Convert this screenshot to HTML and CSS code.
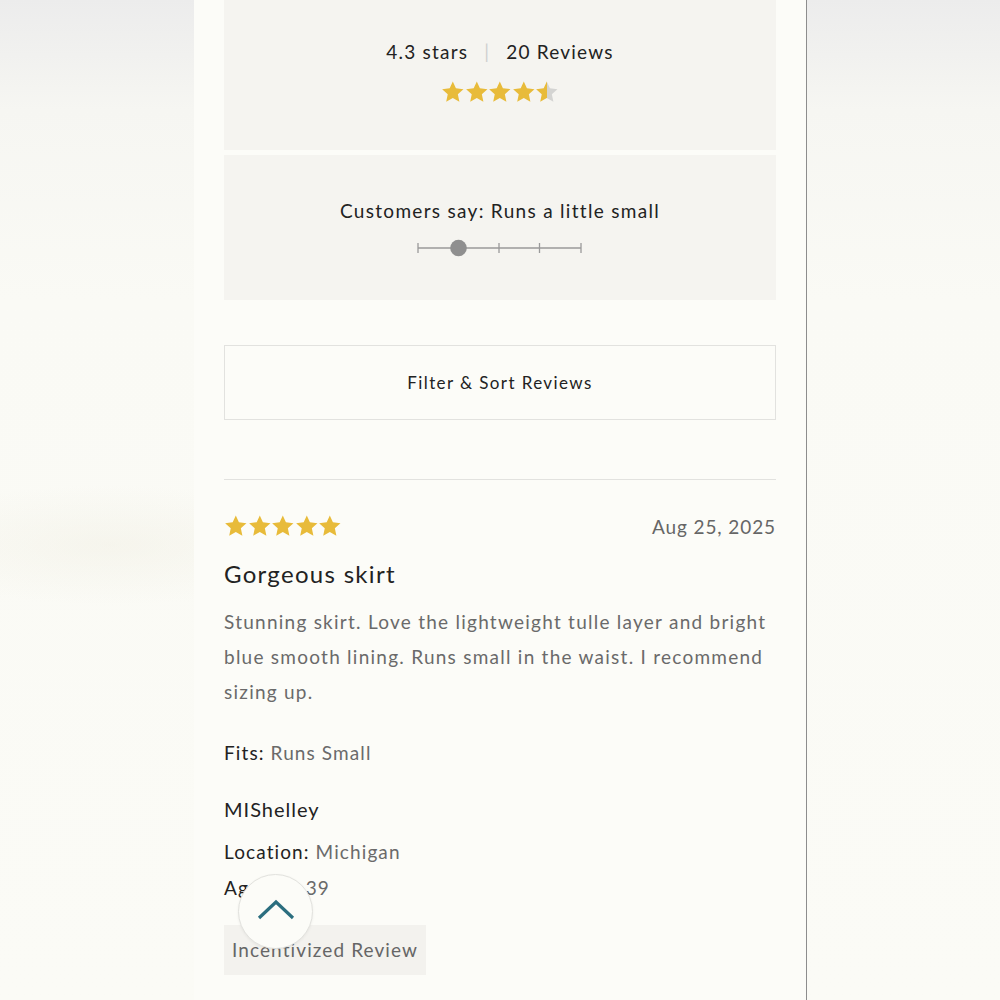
FILE: index.html
```html
<!DOCTYPE html>
<html lang="en">
<head>
  <meta charset="UTF-8" />
  <title>Reviews</title>
  <link rel="stylesheet" href="styles.css">
</head>
<body>
  <svg width="0" height="0" class="defs">
    <defs>
      <symbol id="star" viewBox="0 0 24 24">
        <polygon points="12,1.2 15.17,8.23 22.84,9.08 17.14,14.27 18.7,21.82 12,18 5.3,21.82 6.86,14.27 1.16,9.08 8.83,8.23" />
      </symbol>
      <linearGradient id="half">
        <stop offset="53%" stop-color="#e8bb3a" />
        <stop offset="53%" stop-color="#d4d4d2" />
      </linearGradient>
    </defs>
  </svg>

  <main class="page">
    <section class="summary">
      <p class="summary-line">4.3 stars <span class="sep">|</span> 20 Reviews</p>
      <div class="stars">
        <svg class="star"><use href="#star" /></svg>
        <svg class="star"><use href="#star" /></svg>
        <svg class="star"><use href="#star" /></svg>
        <svg class="star"><use href="#star" /></svg>
        <svg class="star half"><use href="#star" /></svg>
      </div>
    </section>

    <section class="fit">
      <p class="fit-label">Customers say: Runs a little small</p>
      <svg class="fit-scale" width="166" height="20" viewBox="0 0 166 20">
        <line x1="1" y1="10" x2="164" y2="10" stroke="#9a9a9a" stroke-width="1.3" />
        <line x1="1" y1="5" x2="1" y2="15" stroke="#9a9a9a" stroke-width="1.3" />
        <line x1="82" y1="5" x2="82" y2="15" stroke="#9a9a9a" stroke-width="1.3" />
        <line x1="122.5" y1="5" x2="122.5" y2="15" stroke="#9a9a9a" stroke-width="1.3" />
        <line x1="164" y1="5" x2="164" y2="15" stroke="#9a9a9a" stroke-width="1.3" />
        <circle cx="41.5" cy="10" r="8.3" fill="#8f8f8f" />
      </svg>
    </section>

    <button class="filter-btn">Filter &amp; Sort Reviews</button>

    <article class="review">
      <div class="review-head">
        <div class="stars small">
          <svg class="star"><use href="#star" /></svg>
          <svg class="star"><use href="#star" /></svg>
          <svg class="star"><use href="#star" /></svg>
          <svg class="star"><use href="#star" /></svg>
          <svg class="star"><use href="#star" /></svg>
        </div>
        <span class="date">Aug 25, 2025</span>
      </div>
      <h3 class="review-title">Gorgeous skirt</h3>
      <p class="review-body">Stunning skirt. Love the lightweight tulle layer and bright blue smooth lining. Runs small in the waist. I recommend sizing up.</p>
      <p class="meta fits"><b>Fits:</b> Runs Small</p>
      <p class="author">MIShelley</p>
      <p class="meta"><b>Location:</b> Michigan</p>
      <p class="meta"><b>Age:</b> <span class="age">39</span></p>
      <span class="tag">Incentivized Review</span>
    </article>

    <button class="to-top" aria-label="Back to top">
      <svg width="40" height="24" viewBox="0 0 40 24">
        <polyline points="3,20 20,4 37,20" fill="none" stroke="#2b6e7f" stroke-width="3.2" />
      </svg>
    </button>
  </main>
</body>
</html>
```

FILE: styles.css
```css
html, body {
  margin: 0;
  height: 1000px;
  overflow: hidden;
}
body {
  font-family: Lato, "Noto Sans", sans-serif;
  background:
    radial-gradient(ellipse 220px 60px at 110px 545px, rgba(240, 238, 226, 0.45), transparent),
    linear-gradient(#ececec 0, #f6f6f2 110px, #fafaf5 300px, #fbfbf6 1000px);
}
.defs {
  position: absolute;
}
.page {
  position: relative;
  width: 613px;
  height: 1000px;
  margin-left: 194px;
  padding: 0 30px;
  box-sizing: border-box;
  background: #fcfcf8;
  border-right: 1px solid #8d8d8d;
}
p {
  margin: 0;
}
.summary,
.fit {
  background: #f5f4f0;
  text-align: center;
}
.summary {
  height: 150px;
  padding-top: 40px;
  box-sizing: border-box;
}
.summary-line {
  font-size: 19px;
  color: #222;
  letter-spacing: 1.2px;
}
.sep {
  color: #cfcfcf;
  margin: 0 10px;
}
.stars {
  display: flex;
  justify-content: center;
  gap: 0;
  margin-top: 17px;
}
.star {
  width: 23.6px;
  height: 24px;
  fill: #e8bb3a;
}
.star.half {
  fill: url(#half);
}
.fit {
  margin-top: 5px;
  height: 145px;
  padding-top: 44px;
  box-sizing: border-box;
}
.fit-label {
  font-size: 19px;
  color: #222;
  letter-spacing: 1.3px;
}
.fit-scale {
  display: block;
  margin: 16px auto 0;
}
.filter-btn {
  display: block;
  width: 100%;
  height: 75px;
  margin-top: 45px;
  background: transparent;
  border: 1px solid #e2e2df;
  font-family: inherit;
  font-size: 17px;
  letter-spacing: 1.4px;
  color: #222;
  padding-bottom: 2px;
}
.review {
  margin-top: 59px;
  border-top: 1px solid #e2e2df;
  padding-top: 34px;
}
.review-head {
  display: flex;
  justify-content: space-between;
  align-items: center;
}
.stars.small {
  margin-top: 0;
}
.date {
  font-size: 19px;
  color: #666;
  letter-spacing: 0.9px;
}
.review-title {
  margin: 21px 0 0;
  font-size: 24px;
  font-weight: 400;
  color: #222;
  letter-spacing: 1.3px;
}
.review-body {
  margin-top: 16px;
  font-size: 19px;
  line-height: 35px;
  color: #6a6a6a;
  letter-spacing: 1.25px;
}
.meta {
  font-size: 19px;
  line-height: 24px;
  color: #6a6a6a;
  letter-spacing: 1.1px;
  margin-top: 12px;
}
.meta b {
  font-weight: 400;
  color: #222;
}
.age {
  margin-left: 34px;
}
.fits {
  margin-top: 32px;
}
.author {
  margin-top: 32px;
  font-size: 20px;
  color: #222;
  letter-spacing: 1px;
  margin-bottom: 19px;
}
.author + .meta {
  margin-top: 0;
}
.tag {
  display: inline-block;
  margin-top: 25px;
  padding: 13px 8px 14px;
  background: #f3f2ee;
  font-size: 19px;
  color: #666;
  letter-spacing: 1.1px;
}
.to-top {
  position: absolute;
  left: 44px;
  top: 874px;
  width: 75px;
  height: 75px;
  border-radius: 50%;
  border: 1.5px solid #e2e2de;
  background: #fcfcf8;
  box-shadow: 0 1px 3px rgba(0, 0, 0, 0.06);
  padding: 0;
  display: flex;
  align-items: center;
  justify-content: center;
}
.to-top svg {
  margin-top: -4px;
}
```
